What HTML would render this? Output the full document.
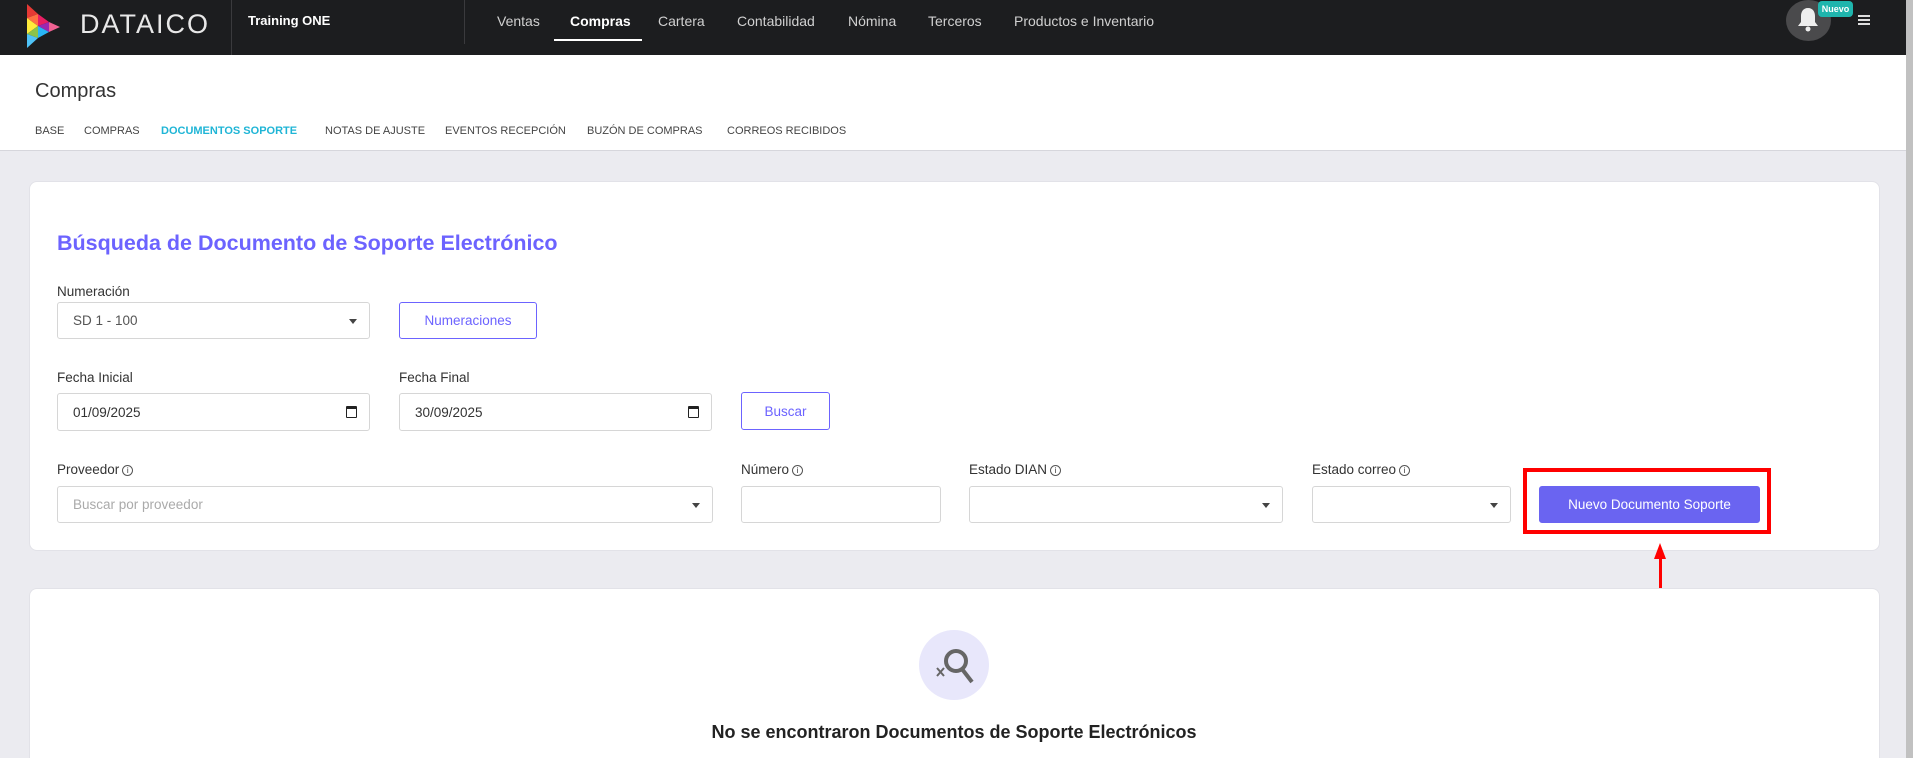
<!DOCTYPE html>
<html style="overflow:hidden;height:758px"><head><meta charset="utf-8"><style>
*{box-sizing:border-box;margin:0;padding:0}
body{width:1913px;height:758px;overflow:hidden;background:#ebebf0;font-family:"Liberation Sans",sans-serif;position:relative;color:#333}
.abs{position:absolute}
.nav{left:0;top:0;width:1906px;height:55px;background:#1c1d1f}
.nav .m{position:absolute;top:13px;font-size:14px;color:#d0d0d0}
.hdr{left:0;top:55px;width:1906px;height:96px;background:#fff;border-bottom:1px solid #d6d6dc}
.tab{position:absolute;top:125px;font-size:11px;color:#444}
.card{background:#fff;border-radius:8px;border:1px solid #e2e2e8}
.lbl{position:absolute;font-size:13.5px;color:#333}
.inp{position:absolute;background:#fff;border:1px solid #d6d6d6;border-radius:3px;font-size:13.5px;color:#333;padding-left:15px;display:flex;align-items:center}
.car{position:absolute;right:12px;top:50%;margin-top:-2px;border-left:4px solid transparent;border-right:4px solid transparent;border-top:5px solid #444}
.btn{position:absolute;border:1px solid #6c63ff;border-radius:3px;color:#6c63ff;font-size:13.5px;display:flex;align-items:center;justify-content:center;background:#fff}
.i{display:inline-block;width:11px;height:11px;border:1px solid #555;border-radius:50%;font-size:8px;line-height:9px;text-align:center;vertical-align:1px;margin-left:3px}
.cal{position:absolute;right:12px;top:50%;margin-top:-6px;width:11px;height:12px;border:1.5px solid #222;border-top-width:3px;border-radius:1px}
</style></head><body>
<div class="abs nav">
 <svg class="abs" style="left:24px;top:4px" width="42" height="46" viewBox="0 0 42 46">
  <polygon points="3,0 14,10 3,14" fill="#e53935"/><polygon points="14,10 25,18 14,22" fill="#e91e63"/>
  <polygon points="3,14 14,10 14,22" fill="#ff7043"/><polygon points="25,18 36,23 25,28" fill="#f06292"/>
  <polygon points="3,14 14,22 3,30" fill="#ffeb3b"/><polygon points="14,22 25,18 25,28" fill="#9c27b0"/>
  <polygon points="3,30 14,22 14,34" fill="#8bc34a"/><polygon points="14,22 25,28 14,34" fill="#29b6f6"/>
  <polygon points="3,30 14,34 3,44" fill="#4fc3f7"/>
 </svg>
 <div class="abs" style="left:80px;top:9px;font-size:27px;color:#e8e8e8;letter-spacing:2px;font-weight:300">DATAICO</div>
 <div class="abs" style="left:231px;top:0;width:1px;height:55px;background:#3a3a3d"></div>
 <div class="abs" style="left:248px;top:13px;font-size:13px;font-weight:bold;color:#fff">Training ONE</div>
 <div class="abs" style="left:464px;top:0;width:1px;height:44px;background:#3a3a3d"></div>
 <span class="m" style="left:497px">Ventas</span>
 <span class="m" style="left:570px;color:#fff;font-weight:bold">Compras</span>
 <div class="abs" style="left:554px;top:39px;width:88px;height:2px;background:#fff"></div>
 <span class="m" style="left:658px">Cartera</span>
 <span class="m" style="left:737px">Contabilidad</span>
 <span class="m" style="left:848px">Nómina</span>
 <span class="m" style="left:928px">Terceros</span>
 <span class="m" style="left:1014px">Productos e Inventario</span>
 <div class="abs" style="left:1786px;top:0;width:45px;height:41px;border-radius:50%;background:#4a4a4c"></div>
 <svg class="abs" style="left:1796px;top:7px" width="24" height="26" viewBox="0 0 24 26"><path d="M12 1c-5 0-7 4-7 8v6l-3 4h20l-3-4V9c0-4-2-8-7-8z" fill="#eee"/><circle cx="12" cy="22" r="2.5" fill="#eee"/></svg>
 <div class="abs" style="left:1818px;top:1px;width:35px;height:16px;background:#1fb5ad;border-radius:4px;color:#fff;font-size:9px;font-weight:bold;text-align:center;line-height:16px">Nuevo</div>
 <div class="abs" style="left:1858px;top:15px;width:12px;height:2px;background:#ddd;box-shadow:0 4px 0 #ddd,0 8px 0 #ddd"></div>
</div>
<div class="abs" style="left:1906px;top:0;width:7px;height:758px;background:#c1c1c1"></div>
<div class="abs hdr">
 <div class="abs" style="left:35px;top:25px;font-size:20px;color:#333;font-weight:300">Compras</div>
</div>
<span class="tab" style="left:35px">BASE</span>
<span class="tab" style="left:84px">COMPRAS</span>
<span class="tab" style="left:161px;color:#1fb5d6;font-weight:bold">DOCUMENTOS SOPORTE</span>
<span class="tab" style="left:325px">NOTAS DE AJUSTE</span>
<span class="tab" style="left:445px">EVENTOS RECEPCIÓN</span>
<span class="tab" style="left:587px">BUZÓN DE COMPRAS</span>
<span class="tab" style="left:727px">CORREOS RECIBIDOS</span>

<div class="abs card" style="left:29px;top:181px;width:1851px;height:370px"></div>
<div class="abs" style="left:57px;top:231px;font-size:21.5px;font-weight:bold;color:#6c63ff">Búsqueda de Documento de Soporte Electrónico</div>
<div class="lbl" style="left:57px;top:284px">Numeración</div>
<div class="inp" style="left:57px;top:302px;width:313px;height:37px;color:#555">SD 1 - 100<span class="car"></span></div>
<div class="btn" style="left:399px;top:302px;width:138px;height:37px">Numeraciones</div>
<div class="lbl" style="left:57px;top:370px">Fecha Inicial</div>
<div class="lbl" style="left:399px;top:370px">Fecha Final</div>
<div class="inp" style="left:57px;top:393px;width:313px;height:38px">01/09/2025<span class="cal"></span></div>
<div class="inp" style="left:399px;top:393px;width:313px;height:38px">30/09/2025<span class="cal"></span></div>
<div class="btn" style="left:741px;top:392px;width:89px;height:38px">Buscar</div>
<div class="lbl" style="left:57px;top:462px">Proveedor<span class="i">i</span></div>
<div class="lbl" style="left:741px;top:462px">Número<span class="i">i</span></div>
<div class="lbl" style="left:969px;top:462px">Estado DIAN<span class="i">i</span></div>
<div class="lbl" style="left:1312px;top:462px">Estado correo<span class="i">i</span></div>
<div class="inp" style="left:57px;top:486px;width:656px;height:37px;color:#aaa">Buscar por proveedor<span class="car"></span></div>
<div class="inp" style="left:741px;top:486px;width:200px;height:37px"></div>
<div class="inp" style="left:969px;top:486px;width:314px;height:37px"><span class="car"></span></div>
<div class="inp" style="left:1312px;top:486px;width:199px;height:37px"><span class="car"></span></div>
<div class="abs" style="left:1523px;top:468px;width:248px;height:66px;border:4px solid #f00"></div>
<div class="btn" style="left:1539px;top:486px;width:221px;height:37px;background:#6a64f1;color:#fff;border-color:#6a64f1">Nuevo Documento Soporte</div>
<div class="abs" style="left:1659px;top:555px;width:3px;height:33px;background:#f00"></div>
<div class="abs" style="left:1654px;top:543px;border-left:6px solid transparent;border-right:6px solid transparent;border-bottom:16px solid #f00"></div>

<div class="abs" style="left:29px;top:588px;width:1851px;height:170px;background:#fff;border:1px solid #e2e2e8;border-bottom:none;border-radius:8px 8px 0 0"></div>
<div class="abs" style="left:919px;top:630px;width:70px;height:70px;border-radius:50%;background:#e8e7fb"></div>
<svg class="abs" style="left:929px;top:642px" width="50" height="50" viewBox="0 0 50 50"><circle cx="27" cy="19" r="10" fill="none" stroke="#666" stroke-width="4"/><path d="M33 27l10 13" stroke="#666" stroke-width="4"/><path d="M8 26l7 8M15 26l-7 8" stroke="#666" stroke-width="2"/></svg>
<div class="abs" style="left:0;width:1908px;top:722px;text-align:center;font-size:18px;font-weight:bold;color:#222">No se encontraron Documentos de Soporte Electrónicos</div>
</body></html>
